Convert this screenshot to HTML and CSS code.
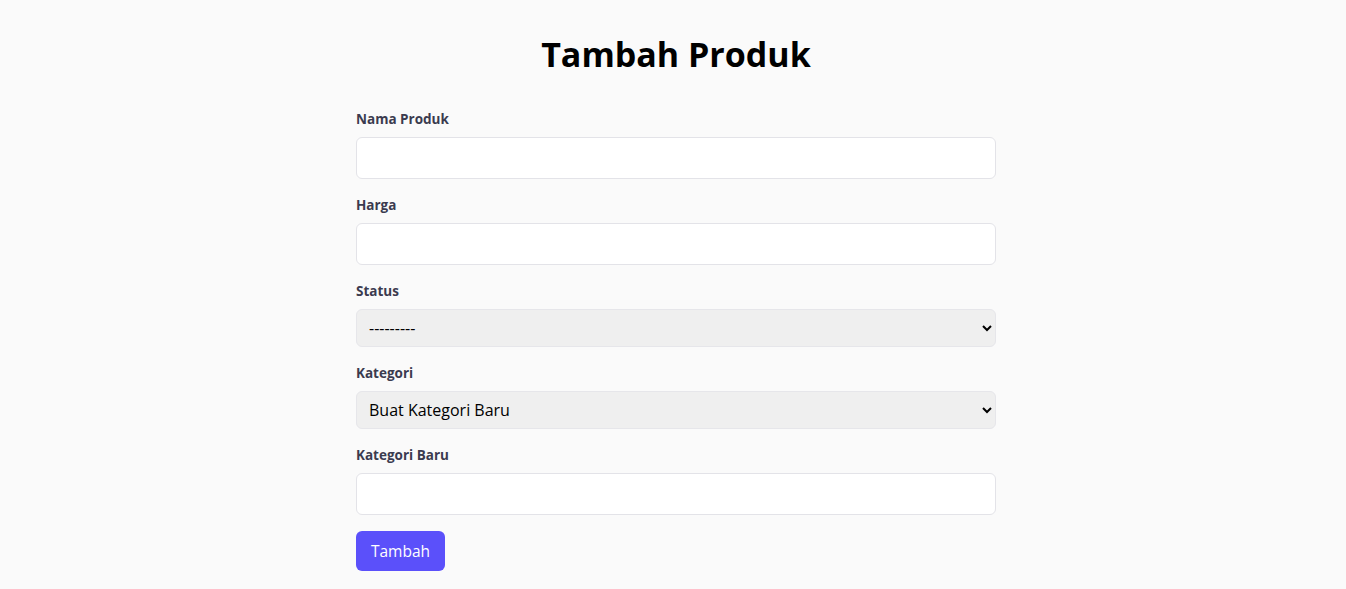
FILE: index.html
```html
<!DOCTYPE html>
<html lang="id">
<head>
<meta charset="utf-8">
<title>Tambah Produk</title>
<link rel="stylesheet" href="styles.css">
</head>
<body>
<main class="page">
  <form class="form">
    <h1 class="title">Tambah Produk</h1>
    <div class="field">
      <label class="label" for="nama">Nama Produk</label>
      <input class="input" id="nama" type="text">
    </div>
    <div class="field">
      <label class="label" for="harga">Harga</label>
      <input class="input" id="harga" type="text">
    </div>
    <div class="field">
      <label class="label" for="status">Status</label>
      <select class="select" id="status">
        <option>---------</option>
      </select>
    </div>
    <div class="field">
      <label class="label" for="kategori">Kategori</label>
      <select class="select" id="kategori">
        <option>Buat Kategori Baru</option>
      </select>
    </div>
    <div class="field">
      <label class="label" for="baru">Kategori Baru</label>
      <input class="input" id="baru" type="text">
    </div>
    <button class="button" type="button">Tambah</button>
  </form>
</main>
</body>
</html>
```

FILE: styles.css
```css
* { box-sizing: border-box; }
html, body { margin: 0; padding: 0; }
body {
  background: #fafafa;
  font-family: "Open Sans", "Noto Sans", sans-serif;
  color: #000;
}
.page {
  padding: 34px 0 0 6px;
}
.form {
  width: 640px;
  margin: 0 auto;
  display: flex;
  flex-direction: column;
}
.title {
  margin: 0 0 35px;
  font-size: 34px;
  line-height: 40px;
  font-weight: 700;
  text-align: center;
}
.field {
  display: flex;
  flex-direction: column;
  margin-bottom: 16px;
}
.label {
  font-size: 13.5px;
  line-height: 20px;
  font-weight: 700;
  color: #3b3b4f;
  margin-bottom: 8px;
}
.input {
  height: 42px;
  border: 1px solid #e3e3e8;
  border-radius: 6px;
  background: #fff;
  font: inherit;
  padding: 0 12px;
}
.select {
  height: 38px;
  border: 1px solid #e6e6ea;
  border-radius: 6px;
  background: #efefef;
  font-family: inherit;
  font-size: 16px;
  color: #000;
  padding: 0 8px;
}
.button {
  align-self: flex-start;
  width: 89px;
  height: 40px;
  border: none;
  border-radius: 6px;
  background: #5b50fa;
  color: #fff;
  font-family: inherit;
  font-size: 15.5px;
}
```
